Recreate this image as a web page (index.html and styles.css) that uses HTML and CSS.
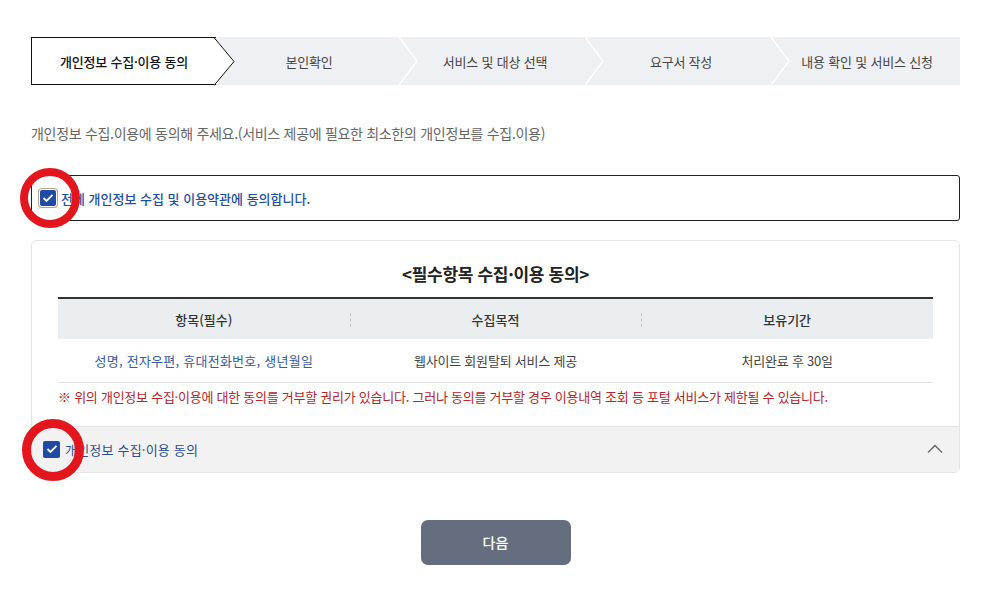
FILE: index.html
```html
<!DOCTYPE html>
<html lang="ko">
<head>
<meta charset="utf-8">
<link rel="stylesheet" href="styles.css">
</head>
<body>
<div class="page">
  <ol class="steps">
    <li class="step active"><span>개인정보 수집·이용 동의</span>
      <svg class="chev" width="22" height="50" viewBox="0 0 22 50"><path d="M0 0.5 L20 24.5 L0 48.5" fill="#fff" stroke="#111" stroke-width="1"/></svg>
    </li>
    <li class="step"><span>본인확인</span>
      <svg class="chev" width="22" height="50" viewBox="0 0 22 50"><path d="M0 0 L18 24 L0 48" fill="#eef0f3" stroke="#fff" stroke-width="1.5"/></svg>
    </li>
    <li class="step"><span>서비스 및 대상 선택</span>
      <svg class="chev" width="22" height="50" viewBox="0 0 22 50"><path d="M0 0 L18 24 L0 48" fill="#eef0f3" stroke="#fff" stroke-width="1.5"/></svg>
    </li>
    <li class="step"><span>요구서 작성</span>
      <svg class="chev" width="22" height="50" viewBox="0 0 22 50"><path d="M0 0 L18 24 L0 48" fill="#eef0f3" stroke="#fff" stroke-width="1.5"/></svg>
    </li>
    <li class="step"><span>내용 확인 및 서비스 신청</span></li>
  </ol>

  <p class="intro">개인정보 수집.이용에 동의해 주세요.(서비스 제공에 필요한 최소한의 개인정보를 수집.이용)</p>

  <div class="allagree">
    <span class="cb focus"><svg width="12" height="10" viewBox="0 0 12 10"><path d="M1.5 5 L4.5 8 L10.5 1.8" fill="none" stroke="#fff" stroke-width="1.8"/></svg></span>
    <span class="allagree-label">전체 개인정보 수집 및 이용약관에 동의합니다.</span>
    <span class="ring ring1"></span>
  </div>

  <div class="card">
    <div class="panel">
      <h3 class="title">&lt;필수항목 수집·이용 동의&gt;</h3>
      <table class="tbl">
        <thead>
          <tr><th>항목(필수)</th><th>수집목적</th><th>보유기간</th></tr>
        </thead>
        <tbody>
          <tr><td class="blue">성명, 전자우편, 휴대전화번호, 생년월일</td><td>웹사이트 회원탈퇴 서비스 제공</td><td>처리완료 후 30일</td></tr>
        </tbody>
      </table>
      <p class="note">※ 위의 개인정보 수집·이용에 대한 동의를 거부할 권리가 있습니다. 그러나 동의를 거부할 경우 이용내역 조회 등 포털 서비스가 제한될 수 있습니다.</p>
    </div>
    <div class="acc-head">
      <span class="cb"><svg width="12" height="10" viewBox="0 0 12 10"><path d="M1.5 5 L4.5 8 L10.5 1.8" fill="none" stroke="#fff" stroke-width="1.8"/></svg></span>
      <span class="acc-label">개인정보 수집·이용 동의</span>
      <svg class="up" width="16" height="10" viewBox="0 0 16 10"><path d="M1 8.5 L8 1.5 L15 8.5" fill="none" stroke="#666" stroke-width="1.4"/></svg>
      <span class="ring ring2"></span>
    </div>
  </div>

  <div class="actions">
    <button class="btn">다음</button>
  </div>
</div>
</body>
</html>
```

FILE: styles.css
```css
* { box-sizing: border-box; }
html, body { margin: 0; padding: 0; background: #fff; }
body {
  font-family: "Noto Sans CJK KR", "Noto Sans", sans-serif;
  color: #333;
  font-size: 13px;
}
.page { padding: 37px 31px 0 31px; width: 991px; }

.steps {
  list-style: none; margin: 0; padding: 0;
  display: flex; height: 48px;
  background: #eef0f3;
}
.step {
  position: relative;
  flex: 1 1 0;
  display: flex; align-items: center; justify-content: center;
  color: #444; font-size: 13px; letter-spacing: -0.2px;
}
.step span { position: relative; z-index: 2; }
.step .chev { position: absolute; right: -19px; top: -0.5px; z-index: 3; }
.step.active {
  background: #fff;
  border: 1px solid #111; border-right: none;
  color: #111; font-weight: 500;
  flex: 0 0 185px;
}
.step.active .chev { right: -20px; top: -1px; }

.intro {
  margin: 33px 0 0 0;
  font-size: 14px; color: #666; letter-spacing: -0.3px;
  line-height: 30px;
}

.allagree {
  position: relative;
  margin-top: 27px;
  height: 46px;
  border: 1px solid #222; border-radius: 3px;
  display: flex; align-items: center; gap: 5px;
  padding-left: 8px;
}
.cb {
  width: 16px; height: 16px; border-radius: 2px;
  background: #1f4aa5;
  display: inline-flex; align-items: center; justify-content: center;
  flex: 0 0 auto;
}
.cb.focus { box-shadow: 0 0 0 1px #fff, 0 0 0 2px rgba(140,100,60,0.6); }
.allagree-label { color: #1f4f9f; font-weight: 500; font-size: 13px; letter-spacing: 0; }

.ring {
  position: absolute;
  width: 60px; height: 60px;
  border: 8px solid #e3161e; border-radius: 50%;
  z-index: 5;
}
.ring1 { left: -12px; top: -8px; }
.ring2 { left: -10px; top: -8px; width: 62px; height: 62px; border-width: 9px; }

.card {
  margin-top: 19px;
  border: 1px solid #e4e4e4; border-radius: 6px;
}
.panel {
  background: #fff;
  padding: 0 26px 19px 26px;
  border-bottom: 1px solid #e4e4e4;
  border-radius: 6px 6px 0 0;
}
.title {
  margin: 0; padding-top: 18px; height: 56px;
  text-align: center; font-size: 17px; font-weight: 700; color: #222;
  letter-spacing: -0.3px; line-height: 30px;
}
.tbl {
  width: 100%; border-collapse: collapse; table-layout: fixed;
  border-top: 2px solid #333;
}
.tbl th {
  background: #ebeef1; height: 41px;
  font-weight: 500; font-size: 13px; color: #333;
  position: relative;
}
.tbl th + th::before {
  content: ""; position: absolute; left: 0; top: 14px; height: 14px;
  border-left: 1px dashed #c4c8cd;
}
.tbl td {
  height: 43px; text-align: center; font-size: 13px; color: #444;
  border-bottom: 1px solid #e2e2e2;
  letter-spacing: -0.2px;
}
.tbl td.blue { color: #3a5a9c; font-size: 13px; letter-spacing: 0.25px; }
.note {
  margin: 4px 0 0 0; line-height: 20px;
  font-size: 13px; color: #b3262c; letter-spacing: -0.25px;
}
.acc-head {
  position: relative;
  height: 45px; background: #f2f2f2;
  border-radius: 0 0 6px 6px;
  display: flex; align-items: center; gap: 5px;
  padding-left: 11px; padding-right: 16px;
}
.acc-label { color: #2b4f8f; font-size: 13px; letter-spacing: 0.2px; }
.acc-head .cb { width: 17px; height: 17px; }
.up { margin-left: auto; }

.actions { display: flex; justify-content: center; margin-top: 47px; }
.btn {
  width: 150px; height: 45px; border: none; border-radius: 7px;
  background: #646e7e; color: #fff;
  font-family: inherit; font-size: 14px; font-weight: 500;
}
```
